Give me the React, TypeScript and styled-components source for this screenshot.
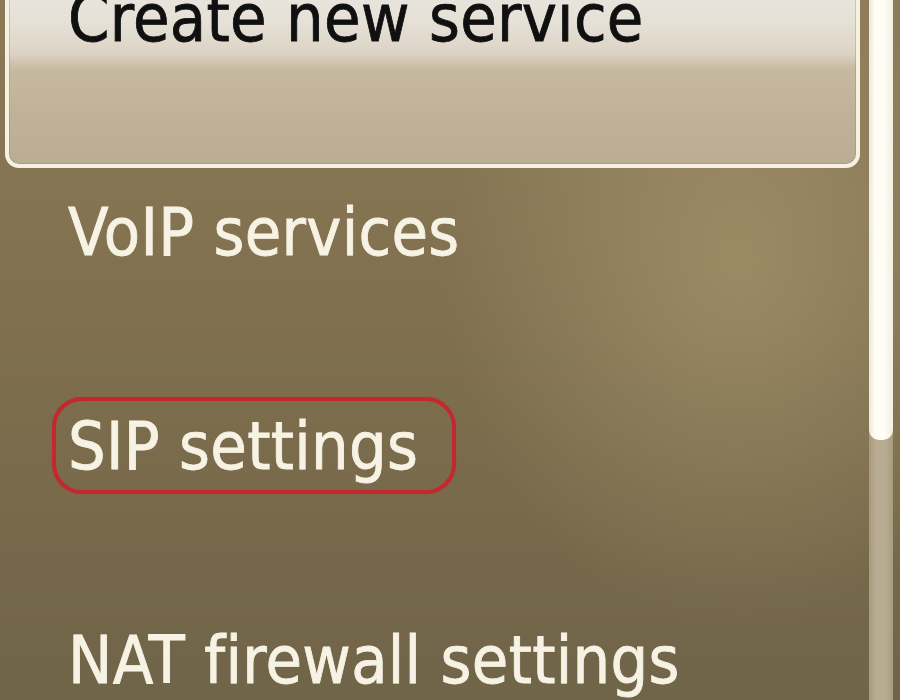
import React from "react";
import styled, { createGlobalStyle } from "styled-components";

const GlobalStyle = createGlobalStyle`
  html, body {
    margin: 0;
    padding: 0;
    width: 900px;
    height: 700px;
    overflow: hidden;
  }
  body {
    font-family: "DejaVu Sans Condensed", "DejaVu Sans", sans-serif;
    font-stretch: condensed;
  }
`;

const Screen = styled.div`
  width: 900px;
  height: 700px;
  overflow: hidden;
  display: flex;
  align-items: flex-start;
  background:
    radial-gradient(ellipse 420px 520px at 82% 38%, rgba(176, 160, 118, 0.55), rgba(176, 160, 118, 0) 70%),
    linear-gradient(180deg, #8c7a57 0%, #837250 35%, #786a4b 70%, #706449 100%);
`;

const List = styled.div`
  width: 855px;
  flex-shrink: 0;
  margin-left: 5px;
  margin-top: -46px;
  display: flex;
  flex-direction: column;
`;

const Row = styled.div<{ $selected?: boolean }>`
  box-sizing: border-box;
  flex: 0 0 214px;
  height: 214px;
  padding: 28px 0 0 59px;
  border: 4px solid ${(p) => (p.$selected ? "#f7f1e1" : "transparent")};
  border-radius: 14px;
  background: ${(p) =>
    p.$selected
      ? "linear-gradient(180deg, #eeebe4 0%, #e6e1d7 30%, #dcd4c6 46%, #d2c7b4 50%, #c8baa0 54%, #c0b299 75%, #bbad93 100%)"
      : "transparent"};
  box-shadow: ${(p) => (p.$selected ? "inset 0 0 0 1px rgba(120,105,80,0.25)" : "none")};
`;

const Label = styled.span<{ $selected?: boolean; $ring?: boolean }>`
  position: relative;
  display: inline-block;
  font-size: 66px;
  line-height: 66px;
  letter-spacing: 0.3px;
  color: ${(p) => (p.$selected ? "#101010" : "#f7f3e4")};
  -webkit-text-stroke: 0.8px ${(p) => (p.$selected ? "#101010" : "#f7f3e4")};
  white-space: nowrap;
  ${(p) =>
    p.$ring
      ? `
    &::after {
      content: "";
      position: absolute;
      left: -16px;
      right: -38px;
      top: -17px;
      bottom: -14px;
      border: 4px solid #c4272c;
      border-radius: 30px;
      box-shadow: 0 0 1px rgba(196,39,44,0.6);
    }
  `
      : ""}
`;

const ScrollTrack = styled.div`
  width: 24px;
  flex-shrink: 0;
  margin-left: 9px;
  height: 700px;
  display: flex;
  flex-direction: column;
  background: linear-gradient(90deg, #a89a7e 0%, #b8ac92 30%, #b8ac92 70%, #a89a7e 100%);
`;

const ScrollThumb = styled.div`
  height: 440px;
  border-radius: 0 0 10px 10px;
  background: linear-gradient(90deg, #ece7d6 0%, #fffdf4 25%, #fffef8 60%, #f3efe0 100%);
`;

const items = [
  "Create new service",
  "VoIP services",
  "SIP settings",
  "NAT firewall settings",
];

export default function App() {
  return (
    <>
      <GlobalStyle />
      <Screen>
        <List>
          {items.map((t, i) => (
            <Row key={t} $selected={i === 0}>
              <Label $selected={i === 0} $ring={t === "SIP settings"}>
                {t}
              </Label>
            </Row>
          ))}
        </List>
        <ScrollTrack>
          <ScrollThumb />
        </ScrollTrack>
      </Screen>
    </>
  );
}
